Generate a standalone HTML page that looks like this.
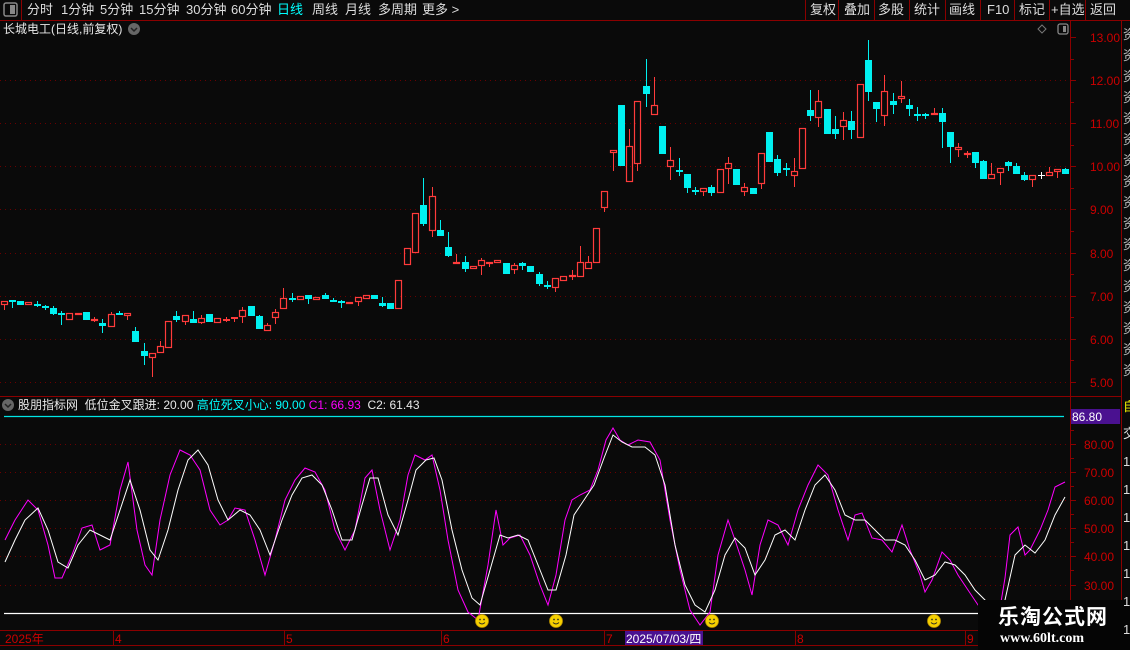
<!DOCTYPE html>
<html><head><meta charset="utf-8"><style>
*{margin:0;padding:0;box-sizing:border-box}
body{width:1130px;height:650px;background:#0a0a0a;overflow:hidden;font-family:"Liberation Sans","Noto Sans CJK SC",sans-serif;color:#ddd;position:relative}
.t{position:absolute;white-space:nowrap;font-size:12px;line-height:14px}
.m{position:absolute;white-space:nowrap;font-size:13px;line-height:15px;top:2px;color:#ddd}
</style></head><body>
<svg id="s" width="1130" height="650" style="position:absolute;left:0;top:0" xmlns="http://www.w3.org/2000/svg">
<g stroke="#8b0000" stroke-width="1" fill="none">
<line x1="0" y1="20.5" x2="1130" y2="20.5"/>
<line x1="21.5" y1="0" x2="21.5" y2="20"/>
<line x1="0" y1="396.5" x2="1122" y2="396.5"/>
<line x1="1070.5" y1="20" x2="1070.5" y2="630"/>
<line x1="1121.5" y1="20" x2="1121.5" y2="650"/>
<line x1="0" y1="630.5" x2="1122" y2="630.5"/>
<line x1="0" y1="645.5" x2="1122" y2="645.5"/>
<line x1="805.5" y1="0" x2="805.5" y2="20"/><line x1="838.5" y1="0" x2="838.5" y2="20"/><line x1="874.5" y1="0" x2="874.5" y2="20"/><line x1="909.5" y1="0" x2="909.5" y2="20"/><line x1="945.5" y1="0" x2="945.5" y2="20"/><line x1="980.5" y1="0" x2="980.5" y2="20"/><line x1="1014.5" y1="0" x2="1014.5" y2="20"/><line x1="1049.5" y1="0" x2="1049.5" y2="20"/><line x1="1085.5" y1="0" x2="1085.5" y2="20"/>
</g>
<g id="grid" stroke="#6a0000" stroke-dasharray="1,4" stroke-width="1"></g>
<g id="ticks" stroke="#8b0000"></g>
<g id="candles"></g>
<line x1="4" y1="416.5" x2="1064" y2="416.5" stroke="#00e5e5" stroke-width="1.3"/>
<line x1="4" y1="613.5" x2="1064" y2="613.5" stroke="#fff" stroke-width="1.3"/>
<polyline id="mag" fill="none" stroke="#ff00ff" stroke-width="1"/>
<polyline id="wht" fill="none" stroke="#fff" stroke-width="1"/>
<g id="smile"></g>
<rect x="1071" y="409" width="49" height="15" fill="#4a1190"/>
<rect x="4" y="3" width="13" height="13" rx="2" fill="none" stroke="#888" stroke-width="1.5"/><rect x="10" y="5" width="5" height="9" fill="#888"/>
<rect x="1058" y="24" width="10" height="10" rx="2" fill="none" stroke="#888" stroke-width="1.3"/><rect x="1063" y="26" width="3" height="6" fill="#888"/>
<path d="M1042 25 L1046 29 L1042 33 L1038 29 Z" fill="none" stroke="#777"/>
<circle cx="134" cy="29" r="6" fill="#666"/><path d="M131 28 L134 31 L137 28" stroke="#222" stroke-width="1.5" fill="none"/>
<circle cx="8" cy="405" r="6" fill="#666"/><path d="M5 404 L8 407 L11 404" stroke="#222" stroke-width="1.5" fill="none"/>
<line x1="113.5" y1="631" x2="113.5" y2="645" stroke="#8b0000"/><line x1="284.5" y1="631" x2="284.5" y2="645" stroke="#8b0000"/><line x1="441.5" y1="631" x2="441.5" y2="645" stroke="#8b0000"/><line x1="604.5" y1="631" x2="604.5" y2="645" stroke="#8b0000"/><line x1="795.5" y1="631" x2="795.5" y2="645" stroke="#8b0000"/><line x1="965.5" y1="631" x2="965.5" y2="645" stroke="#8b0000"/>
<rect x="625" y="631" width="78" height="14" fill="#4a1190"/>
<rect x="978" y="600" width="152" height="50" fill="#050505"/>
</svg>
<div class="m" style="left:27px">分时</div><div class="m" style="left:61px">1分钟</div><div class="m" style="left:100px">5分钟</div><div class="m" style="left:139px">15分钟</div><div class="m" style="left:186px">30分钟</div><div class="m" style="left:231px">60分钟</div><div class="m" style="left:277px;color:#0ff">日线</div><div class="m" style="left:312px">周线</div><div class="m" style="left:345px">月线</div><div class="m" style="left:378px">多周期</div><div class="m" style="left:422px">更多 &gt;</div>
<div class="m" style="left:810px">复权</div><div class="m" style="left:844px">叠加</div><div class="m" style="left:878px">多股</div><div class="m" style="left:914px">统计</div><div class="m" style="left:949px">画线</div><div class="m" style="left:987px">F10</div><div class="m" style="left:1019px">标记</div><div class="m" style="left:1051px">+自选</div><div class="m" style="left:1090px">返回</div>
<div class="t" style="left:3px;top:22px;color:#e8e8e8">长城电工(日线,前复权)</div>
<div class="t" style="left:18px;top:398px;color:#e8e8e8">股朋指标网&nbsp; 低位金叉跟进: 20.00 <span style="color:#0ff">高位死叉小心: 90.00</span> <span style="color:#f0f">C1: 66.93</span>&nbsp; C2: 61.43</div>
<div class="t" style="left:1072px;top:410px;color:#fff;font-size:12px">86.80</div>
<div id="axis"></div>
<div class="t" style="left:5px;top:632px;color:#c00">2025年</div>
<div class="t" style="left:115px;top:632px;color:#c00">4</div><div class="t" style="left:286px;top:632px;color:#c00">5</div><div class="t" style="left:443px;top:632px;color:#c00">6</div><div class="t" style="left:606px;top:632px;color:#c00">7</div><div class="t" style="left:797px;top:632px;color:#c00">8</div><div class="t" style="left:967px;top:632px;color:#c00">9</div>
<div class="t" style="left:626px;top:632px;color:#fff">2025/07/03/四</div>
<div class="t" style="left:1123px;top:24px;color:#bbb;width:7px;overflow:hidden;font-size:13px;line-height:21px">资<br>资<br>资<br>资<br>资<br>资<br>资<br>资<br>资<br>资<br>资<br>资<br>资<br>资<br>资<br>资<br>资</div>
<div class="t" style="left:1123px;top:400px;color:#ee0;width:7px;overflow:hidden;font-size:13px">自</div>
<div class="t" style="left:1123px;top:420px;color:#ddd;width:7px;overflow:hidden;font-size:13px;line-height:28px">交<br>1<br>1<br>1<br>1<br>1<br>1<br>1</div>
<div class="t" style="left:998px;top:606px;color:#fff;font-size:21px;line-height:24px;font-weight:bold;letter-spacing:1px">乐淘公式网</div>
<div class="t" style="left:1000px;top:632px;color:#fff;font-size:14px;font-weight:bold;font-family:'Liberation Serif',serif">www.60lt.com</div>
<script>
var NS="http://www.w3.org/2000/svg";
function el(p,t,a){var e=document.createElementNS(NS,t);for(var k in a)e.setAttribute(k,a[k]);p.appendChild(e);return e;}
var g=document.getElementById('grid'),tk=document.getElementById('ticks'),ax=document.getElementById('axis');
function py(p){return 37+(13-p)*43.1}
function iy(v){return 444+(80-v)*2.81}
for(var p=5;p<=13;p++){var y=Math.round(py(p))+.5;if(p<13)el(g,'line',{x1:0,y1:y,x2:1068,y2:y});el(tk,'line',{x1:1070,y1:y,x2:1076,y2:y});
if(p<13){var y2=Math.round(py(p+.5))+.5;el(tk,'line',{x1:1070,y1:y2,x2:1074,y2:y2});}
ax.innerHTML+='<div class="t" style="left:1090px;top:'+(y-7)+'px;color:#c00">'+p+'.00</div>';}
for(var v=30;v<=80;v+=10){var y=Math.round(iy(v))+.5;el(g,'line',{x1:0,y1:y,x2:1068,y2:y});el(tk,'line',{x1:1070,y1:y,x2:1076,y2:y});var y2=Math.round(iy(v+5))+.5;el(tk,'line',{x1:1070,y1:y2,x2:1074,y2:y2});
ax.innerHTML+='<div class="t" style="left:1084px;top:'+(y-7)+'px;color:#c00">'+v+'.00</div>';}
var D=[[4,301,305,301,310,'r'],[12,300,302,300,308,'c'],[20,301,305,,,'c'],[28,302,305,,,'r'],[37,304,306,301,307,'c'],[45,306,308,305,310,'c'],[53,308,314,306,315,'c'],[61,313,315,311,325,'c'],[69,313,320,,,'r'],[78,313,315,,,'r'],[86,312,320,,,'c'],[94,319,321,317,322,'r'],[102,323,326,319,333,'c'],[111,314,327,312,,'r'],[119,313,315,311,,'c'],[127,313,316,,320,'r'],[135,331,342,327,,'c'],[144,351,356,343,365,'c'],[152,353,358,,377,'r'],[160,346,353,341,,'r'],[168,321,348,,,'r'],[176,316,320,311,322,'c'],[185,315,322,,325,'r'],[193,319,323,311,,'c'],[201,318,323,315,324,'r'],[209,314,322,,,'c'],[217,318,323,,,'r'],[226,319,320,317,322,'r'],[234,317,318,,322,'r'],[242,310,317,307,323,'r'],[251,306,316,,,'c'],[259,316,329,315,,'c'],[267,325,331,323,,'r'],[275,312,318,309,324,'r'],[283,298,309,288,,'r'],[292,298,299,293,302,'c'],[300,296,300,,,'r'],[308,295,299,,304,'c'],[316,297,300,,,'r'],[325,295,299,293,,'c'],[333,300,301,298,302,'c'],[341,301,302,300,308,'c'],[349,302,304,,,'r'],[358,297,302,,306,'r'],[366,295,299,,,'r'],[374,295,299,,,'c'],[382,303,306,297,307,'c'],[390,303,309,,,'c'],[398,280,309,,,'r'],
[407,248,265,,,'r'],[415,213,253,,,'r'],[423,205,224,178,226,'c'],[432,196,231,187,237,'r'],[440,230,236,220,,'c'],[448,247,256,232,257,'c'],[456,262,264,254,,'r'],[465,262,269,256,272,'c'],[473,266,269,,,'r'],[481,260,266,258,275,'r'],[489,262,264,,267,'r'],[497,260,263,,,'r'],[506,263,274,,,'c'],[514,265,270,263,274,'r'],[522,263,266,262,270,'c'],[530,266,272,,,'c'],[539,274,284,272,286,'c'],[547,285,287,281,289,'c'],[555,278,288,,292,'r'],[563,276,281,,,'r'],[572,275,277,270,280,'r'],[580,262,277,246,,'r'],[588,262,269,256,,'r'],[596,228,263,,,'r'],[604,191,208,,212,'r'],
[613,150,153,,171,'r'],[621,105,166,,,'c'],[629,146,182,129,,'r'],[637,101,164,,171,'r'],[646,86,94,59,107,'c'],[654,105,115,77,,'r'],[662,126,154,,,'c'],[670,160,167,147,180,'r'],[679,170,172,158,176,'c'],[687,174,188,,193,'c'],[695,190,192,187,195,'c'],[703,188,192,,196,'r'],[711,187,193,185,196,'c'],[720,169,193,,,'r'],[728,163,169,157,184,'r'],[736,169,185,,,'c'],[744,187,192,183,196,'r'],[753,188,194,,,'c'],[761,153,184,,189,'r'],[769,132,162,,,'c'],[777,159,173,155,176,'c'],[786,168,169,163,176,'c'],[794,171,176,158,187,'r'],[802,128,169,,,'r'],[810,110,116,90,121,'c'],[818,101,118,90,127,'r'],[827,109,134,,,'c'],[835,129,134,116,139,'c'],[843,120,127,112,140,'r'],[851,121,130,111,139,'c'],[860,84,138,,,'r'],[868,60,92,40,101,'c'],[876,102,109,,122,'c'],[884,91,116,75,126,'r'],[893,101,105,93,114,'c'],[901,96,99,81,103,'r'],[909,105,109,99,116,'c'],[917,114,115,107,121,'c'],[925,114,116,113,119,'c'],[934,113,115,108,,'r'],[942,113,122,108,148,'c'],[950,132,147,,163,'c'],[958,147,150,143,157,'r'],[967,153,155,151,158,'r'],[975,152,163,,168,'c'],[983,161,179,160,,'c'],[991,174,179,163,,'r'],[1000,168,173,,185,'r'],[1008,162,166,161,171,'c'],[1016,166,174,163,,'c'],[1024,175,180,172,181,'c'],[1032,175,180,,187,'r'],[1041,175,175,172,179,'w'],[1049,172,176,167,,'r'],[1057,169,172,,178,'r'],[1065,169,174,168,,'c']];
var cg=document.getElementById('candles');
D.forEach(function(d){var x=d[0],t=d[1],b=d[2],h=d[3]||t,l=d[4]||b,c=d[5];
var col=c=='r'?'#ff3b3b':c=='c'?'#00f0f0':'#fff';
if(h<t)el(cg,'line',{x1:x+.5,y1:h,x2:x+.5,y2:t,stroke:col});
if(l>b)el(cg,'line',{x1:x+.5,y1:b,x2:x+.5,y2:l,stroke:col});
if(c=='r'){if(b-t<2)el(cg,'rect',{x:x-3,y:t,width:7,height:2,fill:col});else el(cg,'rect',{x:x-2.5,y:t+.5,width:6,height:b-t-1,fill:'none',stroke:col,'stroke-width':1.2});}
else if(c=='w'){el(cg,'line',{x1:x-3,y1:t+.5,x2:x+4,y2:t+.5,stroke:col});}
else el(cg,'rect',{x:x-3,y:t,width:7,height:Math.max(2,b-t),fill:col});});
var M=[[5,540],[15,520],[28,500],[38,510],[48,545],[55,578],[62,578],[72,555],[82,528],[92,525],[100,550],[110,545],[120,490],[128,462],[137,530],[145,565],[152,575],[160,520],[170,475],[180,450],[190,455],[200,470],[210,510],[220,525],[228,520],[235,508],[245,510],[255,540],[265,575],[275,540],[285,500],[295,480],[305,468],[315,472],[325,490],[335,530],[345,550],[355,530],[365,478],[372,470],[380,510],[390,550],[400,520],[408,475],[415,455],[425,460],[432,455],[440,490],[448,540],[458,590],[468,612],[478,620],[488,565],[496,510],[503,545],[510,538],[520,535],[530,555],[540,585],[548,605],[556,575],[565,520],[572,500],[580,495],[590,490],[598,470],[606,440],[613,428],[620,440],[628,445],[638,440],[650,442],[660,460],[670,520],[680,570],[690,610],[700,625],[710,612],[718,555],[728,520],[735,540],[745,570],[752,595],[760,545],[768,520],[778,525],[788,545],[798,510],[808,485],[818,465],[828,475],[838,510],[848,540],[855,515],[862,513],[872,538],[882,540],[892,552],[902,525],[910,550],[920,575],[925,592],[932,580],[942,552],[950,560],[958,575],[968,590],[978,605],[988,618],[998,620],[1005,578],[1010,535],[1018,527],[1025,555],[1030,550],[1040,530],[1048,510],[1055,487],[1065,482]];
var W=[[5,562],[15,540],[25,520],[38,508],[48,530],[58,562],[68,568],[78,545],[90,530],[100,535],[110,540],[120,510],[130,480],[140,510],[150,550],[158,560],[168,530],[178,490],[188,460],[198,450],[208,465],[218,500],[228,520],[240,510],[250,515],[260,530],[270,555],[282,520],[292,495],[302,478],[312,475],[322,485],[332,510],[342,540],[352,540],[362,505],[370,478],[378,478],[388,515],[398,535],[408,500],[416,470],[426,460],[434,458],[442,480],[452,530],[462,570],[472,598],[480,605],[490,570],[500,535],[508,538],[518,535],[528,540],[538,565],[548,590],[556,590],[566,555],[574,515],[584,500],[594,485],[604,458],[613,435],[622,442],[632,447],[645,447],[655,455],[665,485],[675,545],[685,585],[695,605],[705,612],[715,590],[725,555],[735,538],[745,548],[755,575],[765,560],[775,535],[785,530],[795,540],[805,510],[815,485],[825,475],[835,490],[845,515],[855,520],[865,520],[875,530],[885,540],[895,540],[905,545],[915,560],[925,580],[935,575],[945,562],[955,565],[965,575],[975,590],[985,600],[995,612],[1005,600],[1015,555],[1025,545],[1035,553],[1045,540],[1055,515],[1065,497]];
document.getElementById('mag').setAttribute('points',M.join(' '));
document.getElementById('wht').setAttribute('points',W.join(' '));
var sg=document.getElementById('smile');
[482,556,712,934].forEach(function(x){el(sg,'circle',{cx:x,cy:621,r:6.5,fill:'#f5d000',stroke:'#b89000','stroke-width':.8});el(sg,'circle',{cx:x-2,cy:619.5,r:.9,fill:'#332'});el(sg,'circle',{cx:x+2,cy:619.5,r:.9,fill:'#332'});el(sg,'path',{d:'M'+(x-3)+' 622.5 Q'+x+' 625.5 '+(x+3)+' 622.5',stroke:'#332',fill:'none','stroke-width':.9});});
</script>
</body></html>
